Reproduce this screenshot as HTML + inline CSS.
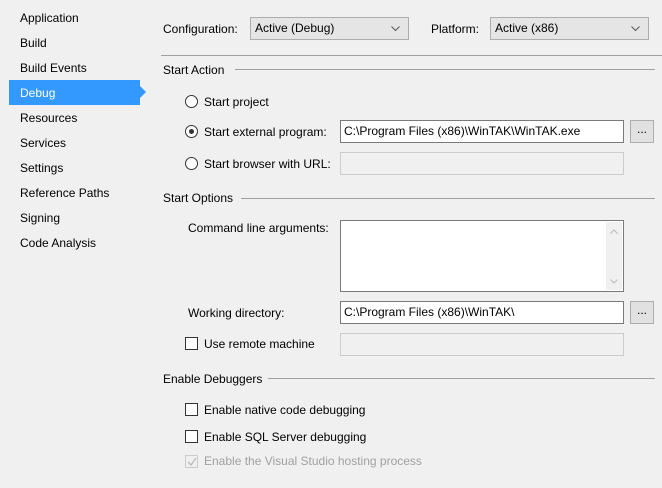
<!DOCTYPE html>
<html><head><style>
*{margin:0;padding:0;box-sizing:border-box}
body{width:662px;height:488px;background:#f0f0f0;font-family:"Liberation Sans",sans-serif;font-size:12px;color:#000;position:relative;overflow:hidden}
.a{position:absolute;white-space:nowrap;line-height:14px}
.nav{position:absolute;left:20px;line-height:14px}
.box{position:absolute;background:#fff;border:1px solid #7a7a7a}
.dis{position:absolute;background:#f0f0f0;border:1px solid #cccccc}
.btn{position:absolute;background:#e1e1e1;border:1px solid #adadad;text-align:center;line-height:16px}
.dd{position:absolute;background:#e5e5e5;border:1px solid #adadad;padding-left:4px;line-height:21px}
.line{position:absolute;height:1px;background:#a0a0a0}
.rad{position:absolute;width:13px;height:13px;border:1px solid #333;border-radius:50%;background:#fff}
.chk{position:absolute;width:13px;height:13px;border:1px solid #333;background:#fff}
.val{position:absolute;left:3px;top:3px;line-height:14px;white-space:nowrap}
</style></head><body>
<div class="nav" style="top:11px">Application</div>
<div class="nav" style="top:36px">Build</div>
<div class="nav" style="top:61px">Build Events</div>
<div style="position:absolute;left:9px;top:80px;width:131px;height:25px;background:#3399ff"></div>
<div style="position:absolute;left:140px;top:86px;width:0;height:0;border-top:6px solid transparent;border-bottom:6px solid transparent;border-left:6px solid #3399ff"></div>
<div class="nav" style="top:86px;color:#fff">Debug</div>
<div class="nav" style="top:111px">Resources</div>
<div class="nav" style="top:136px">Services</div>
<div class="nav" style="top:161px">Settings</div>
<div class="nav" style="top:186px">Reference Paths</div>
<div class="nav" style="top:211px">Signing</div>
<div class="nav" style="top:236px">Code Analysis</div>

<div class="a" style="left:163px;top:22px">Configuration:</div>
<div class="dd" style="left:250px;top:17px;width:159px;height:23px">Active (Debug)<svg style="position:absolute;right:8px;top:8px" width="9" height="6"><path d="M0.5 0.5L4.5 4.5L8.5 0.5" stroke="#555" fill="none"/></svg></div>
<div class="a" style="left:431px;top:22px">Platform:</div>
<div class="dd" style="left:490px;top:17px;width:159px;height:23px">Active (x86)<svg style="position:absolute;right:8px;top:8px" width="9" height="6"><path d="M0.5 0.5L4.5 4.5L8.5 0.5" stroke="#555" fill="none"/></svg></div>
<div class="line" style="left:161px;top:55px;width:501px"></div>

<div class="a" style="left:163px;top:63px">Start Action</div>
<div class="line" style="left:235px;top:69px;width:420px"></div>
<div class="rad" style="left:185px;top:95px"></div>
<div class="a" style="left:204px;top:95px">Start project</div>
<div class="rad" style="left:185px;top:125px"><div style="position:absolute;left:3px;top:3px;width:5px;height:5px;border-radius:50%;background:#333"></div></div>
<div class="a" style="left:204px;top:125px">Start external program:</div>
<div class="box" style="left:340px;top:120px;width:284px;height:23px"><div class="val">C:\Program Files (x86)\WinTAK\WinTAK.exe</div></div>
<div class="btn" style="left:630px;top:120px;width:24px;height:23px">...</div>
<div class="rad" style="left:185px;top:157px"></div>
<div class="a" style="left:204px;top:157px">Start browser with URL:</div>
<div class="dis" style="left:340px;top:152px;width:284px;height:23px"></div>

<div class="a" style="left:163px;top:191px">Start Options</div>
<div class="line" style="left:241px;top:198px;width:414px"></div>
<div class="a" style="left:188px;top:221px">Command line arguments:</div>
<div class="box" style="left:340px;top:220px;width:284px;height:72px"><div style="position:absolute;right:1px;top:1px;width:16px;height:68px;background:#f0f0f0"></div>
<svg style="position:absolute;right:5px;top:8px" width="8" height="5"><path d="M0.5 4.5L4 1L7.5 4.5" stroke="#bbb" fill="none"/></svg>
<svg style="position:absolute;right:5px;top:58px" width="8" height="5"><path d="M0.5 0.5L4 4L7.5 0.5" stroke="#bbb" fill="none"/></svg></div>
<div class="a" style="left:188px;top:306px">Working directory:</div>
<div class="box" style="left:340px;top:301px;width:284px;height:23px"><div class="val">C:\Program Files (x86)\WinTAK\</div></div>
<div class="btn" style="left:630px;top:301px;width:24px;height:23px">...</div>
<div class="chk" style="left:185px;top:337px"></div>
<div class="a" style="left:204px;top:337px">Use remote machine</div>
<div class="dis" style="left:340px;top:333px;width:284px;height:23px"></div>

<div class="a" style="left:163px;top:372px">Enable Debuggers</div>
<div class="line" style="left:268px;top:378px;width:387px"></div>
<div class="chk" style="left:185px;top:403px"></div>
<div class="a" style="left:204px;top:403px">Enable native code debugging</div>
<div class="chk" style="left:185px;top:430px"></div>
<div class="a" style="left:204px;top:430px">Enable SQL Server debugging</div>
<div class="chk" style="left:185px;top:455px;border-color:#ccc;background:#f0f0f0"><svg style="position:absolute;left:1px;top:1px" width="10" height="10"><path d="M1 5L4 8L9 1" stroke="#bbb" stroke-width="1.3" fill="none"/></svg></div>
<div class="a" style="left:204px;top:454px;color:#a0a0a0">Enable the Visual Studio hosting process</div>
</body></html>
